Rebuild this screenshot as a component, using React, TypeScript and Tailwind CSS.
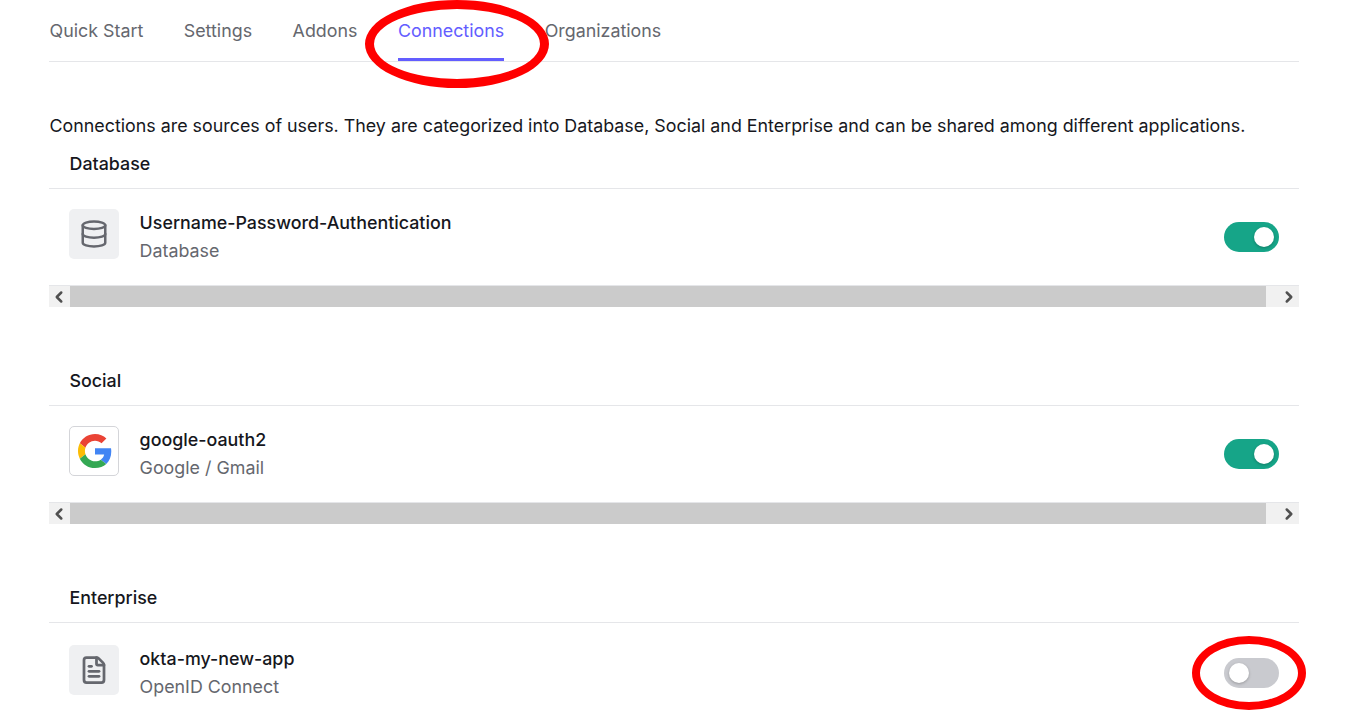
import { ChevronLeft, ChevronRight, Database, FileText } from 'lucide-react';
import type { ReactNode } from 'react';

const tabs = ['Quick Start', 'Settings', 'Addons', 'Connections', 'Organizations'];

function GoogleLogo() {
    return (
        <svg viewBox="0 0 48 48" className="w-[34px] h-[34px] ml-px">
            <path fill="#EA4335" d="M24 9.5c3.54 0 6.71 1.22 9.21 3.6l6.85-6.85C35.9 2.38 30.47 0 24 0 14.62 0 6.51 5.38 2.56 13.22l7.98 6.19C12.43 13.72 17.74 9.5 24 9.5z" />
            <path fill="#4285F4" d="M46.98 24.55c0-1.57-.15-3.09-.38-4.55H24v9.02h12.94c-.58 2.96-2.26 5.48-4.78 7.18l7.73 6c4.51-4.18 7.09-10.36 7.09-17.65z" />
            <path fill="#FBBC05" d="M10.53 28.59c-.48-1.45-.76-2.99-.76-4.59s.27-3.14.76-4.59l-7.98-6.19C.92 16.46 0 20.12 0 24c0 3.88.92 7.54 2.56 10.78l7.97-6.19z" />
            <path fill="#34A853" d="M24 48c6.48 0 11.93-2.13 15.89-5.81l-7.73-6c-2.15 1.45-4.92 2.3-8.16 2.3-6.26 0-11.57-4.22-13.47-9.91l-7.98 6.19C6.51 42.62 14.62 48 24 48z" />
        </svg>
    );
}

function Toggle({ on }: { on: boolean }) {
    return (
        <div className={`w-[55px] h-[30px] rounded-full flex items-center px-[5px] ${on ? 'bg-[#16a588] justify-end' : 'bg-[#c9cacf] justify-start'}`}>
            <div className="w-[20px] h-[20px] rounded-full bg-white shadow-[0_1px_3px_rgba(0,0,0,0.25)]" />
        </div>
    );
}

function Row({ icon, name, type, on, boxed, last }: { icon: ReactNode; name: string; type: string; on: boolean; boxed?: boolean; last?: boolean }) {
    return (
        <div className={`flex items-center justify-between px-5 h-[96px] ${last ? 'pt-[4px]' : ''}`}>
            <div className="flex items-center gap-[20.6px]">
                <div className={`w-[50px] h-[50px] mb-[6px] rounded-[5px] flex items-center justify-center ${boxed ? 'bg-white border border-[#d4d5d9]' : 'bg-[#eff0f2]'}`}>
                    {icon}
                </div>
                <div className="flex flex-col gap-[4px]">
                    <div className="text-[17.85px] leading-[24px] font-medium text-[#16171d]">{name}</div>
                    <div className="text-[17.85px] leading-[24px] text-[#65676e]">{type}</div>
                </div>
            </div>
            <Toggle on={on} />
        </div>
    );
}

function FakeScrollbar() {
    return (
        <div className="flex h-[22px] bg-[#f1f1f1] border-t border-[#e5e6e9]">
            <div className="w-[21px] flex items-center justify-start pl-px text-[#505050]">
                <ChevronLeft size={18} strokeWidth={3.3} />
            </div>
            <div className="flex-1 bg-[#cbcbcb]" />
            <div className="w-[33px] flex items-center justify-end pr-px text-[#505050]">
                <ChevronRight size={18} strokeWidth={3.3} />
            </div>
        </div>
    );
}

function Section({ title, children, scroll }: { title: string; children: ReactNode; scroll?: boolean }) {
    return (
        <section className={scroll ? 'mb-[62px]' : ''}>
            <div className="h-[37px] pl-[20.5px] text-[17.85px] leading-[24px] font-medium text-[#16171d] border-b border-[#e5e6e9]">{title}</div>
            {children}
            {scroll && <FakeScrollbar />}
        </section>
    );
}

export default function App() {
    return (
        <div className="relative h-[710px] overflow-hidden bg-white font-['Inter',sans-serif]">
            <div className="px-[49px]">
                {/* Tabs */}
                <nav className="flex gap-[40.5px] h-[62px] pl-[0.5px] border-b border-[#e5e6e9]">
                    {tabs.map((tab) => (
                        <div
                            key={tab}
                            className={`pt-[19px] text-[17.85px] leading-[24px] h-[61px] ${tab === 'Connections' ? 'text-[#635dff] border-b-[3px] border-[#635dff]' : 'text-[#65676e]'}`}
                        >
                            {tab}
                        </div>
                    ))}
                </nav>

                <p className="mt-[52px] mb-[14px] pl-[0.5px] text-[17.85px] leading-[24px] text-[#16171d] whitespace-nowrap">
                    Connections are sources of users. They are categorized into Database, Social and Enterprise and can be shared among different applications.
                </p>

                <Section title="Database" scroll>
                    <Row icon={<Database size={30} strokeWidth={2} className="text-[#65676e]" />} name="Username-Password-Authentication" type="Database" on />
                </Section>
                <Section title="Social" scroll>
                    <Row icon={<GoogleLogo />} name="google-oauth2" type="Google / Gmail" on boxed />
                </Section>
                <Section title="Enterprise">
                    <Row icon={<FileText size={30} strokeWidth={2.2} className="text-[#65676e]" />} name="okta-my-new-app" type="OpenID Connect" on={false} last />
                </Section>
            </div>

            {/* Red annotation circles */}
            <div className="absolute left-[365px] top-[0px] w-[184px] h-[88px] rounded-[50%] border-[9px] border-[#ff0000]" />
            <div className="absolute left-[1192px] top-[636px] w-[114px] h-[74px] rounded-[50%] border-[8px] border-[#ff0000]" />
        </div>
    );
}
